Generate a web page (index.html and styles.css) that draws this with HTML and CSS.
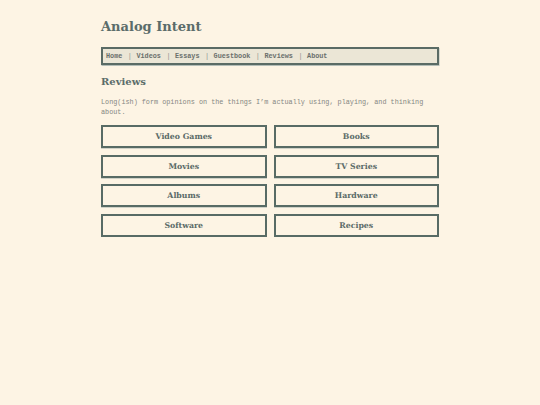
FILE: index.html
```html
<!DOCTYPE html>
<html lang="en">
<head>
<meta charset="utf-8">
<title>Reviews - Analog Intent</title>
<link rel="stylesheet" href="styles.css">
</head>
<body>
<div class="page">
  <h1 class="site-title">Analog Intent</h1>
  <nav class="nav">
    <a href="#">Home</a><span class="sep">|</span><a href="#">Videos</a><span class="sep">|</span><a href="#">Essays</a><span class="sep">|</span><a href="#">Guestbook</a><span class="sep">|</span><a href="#">Reviews</a><span class="sep">|</span><a href="#">About</a>
  </nav>
  <h2 class="heading">Reviews</h2>
  <p class="intro">Long(ish) form opinions on the things I’m actually using, playing, and thinking about.</p>
  <div class="grid">
    <a class="tile" href="#">Video Games</a>
    <a class="tile" href="#">Books</a>
    <a class="tile" href="#">Movies</a>
    <a class="tile" href="#">TV Series</a>
    <a class="tile" href="#">Albums</a>
    <a class="tile" href="#">Hardware</a>
    <a class="tile" href="#">Software</a>
    <a class="tile" href="#">Recipes</a>
  </div>
</div>
</body>
</html>
```
FILE: styles.css
```css
html, body {
  margin: 0;
  background: #fdf4e4;
}
.page {
  width: 338px;
  margin: 0 auto;
  padding-top: 17px;
}
.site-title {
  margin: 0;
  font-family: "DejaVu Serif", serif;
  font-size: 13px;
  line-height: 20px;
  font-weight: bold;
  color: #5b6c6a;
}
.nav {
  margin-top: 10px;
  height: 14px;
  display: flex;
  align-items: center;
  padding: 0 3px;
  background: #ebe6d6;
  border: 2px solid #5a6b65;
  box-shadow: 0.5px 1px 0 #b3bdb7;
  font-family: "Liberation Mono", monospace;
  font-size: 6.8px;
  line-height: 14px;
  font-weight: bold;
  color: #6a6f6c;
}
.nav a {
  color: #6a6f6c;
  text-decoration: none;
}
.nav .sep {
  color: #8c918e;
  font-weight: normal;
  margin: 0 4.5px 0 5.5px;
}
.heading {
  margin: 9px 0 0;
  font-family: "DejaVu Serif", serif;
  font-size: 10px;
  line-height: 15px;
  font-weight: bold;
  color: #5b6c6a;
}
.intro {
  margin: 8px 0 0;
  font-family: "Liberation Mono", monospace;
  font-size: 6.8px;
  line-height: 10px;
  color: #858783;
}
.grid {
  margin-top: 8px;
  display: grid;
  grid-template-columns: 1fr 1fr;
  column-gap: 7px;
  row-gap: 6.67px;
}
.tile {
  height: 19px;
  display: flex;
  align-items: center;
  justify-content: center;
  border: 2px solid #586b65;
  box-shadow: 0 0.5px 0 #a3b0aa;
  font-family: "DejaVu Serif", serif;
  font-size: 7.8px;
  font-weight: bold;
  color: #5b6b68;
  text-decoration: none;
}
```
